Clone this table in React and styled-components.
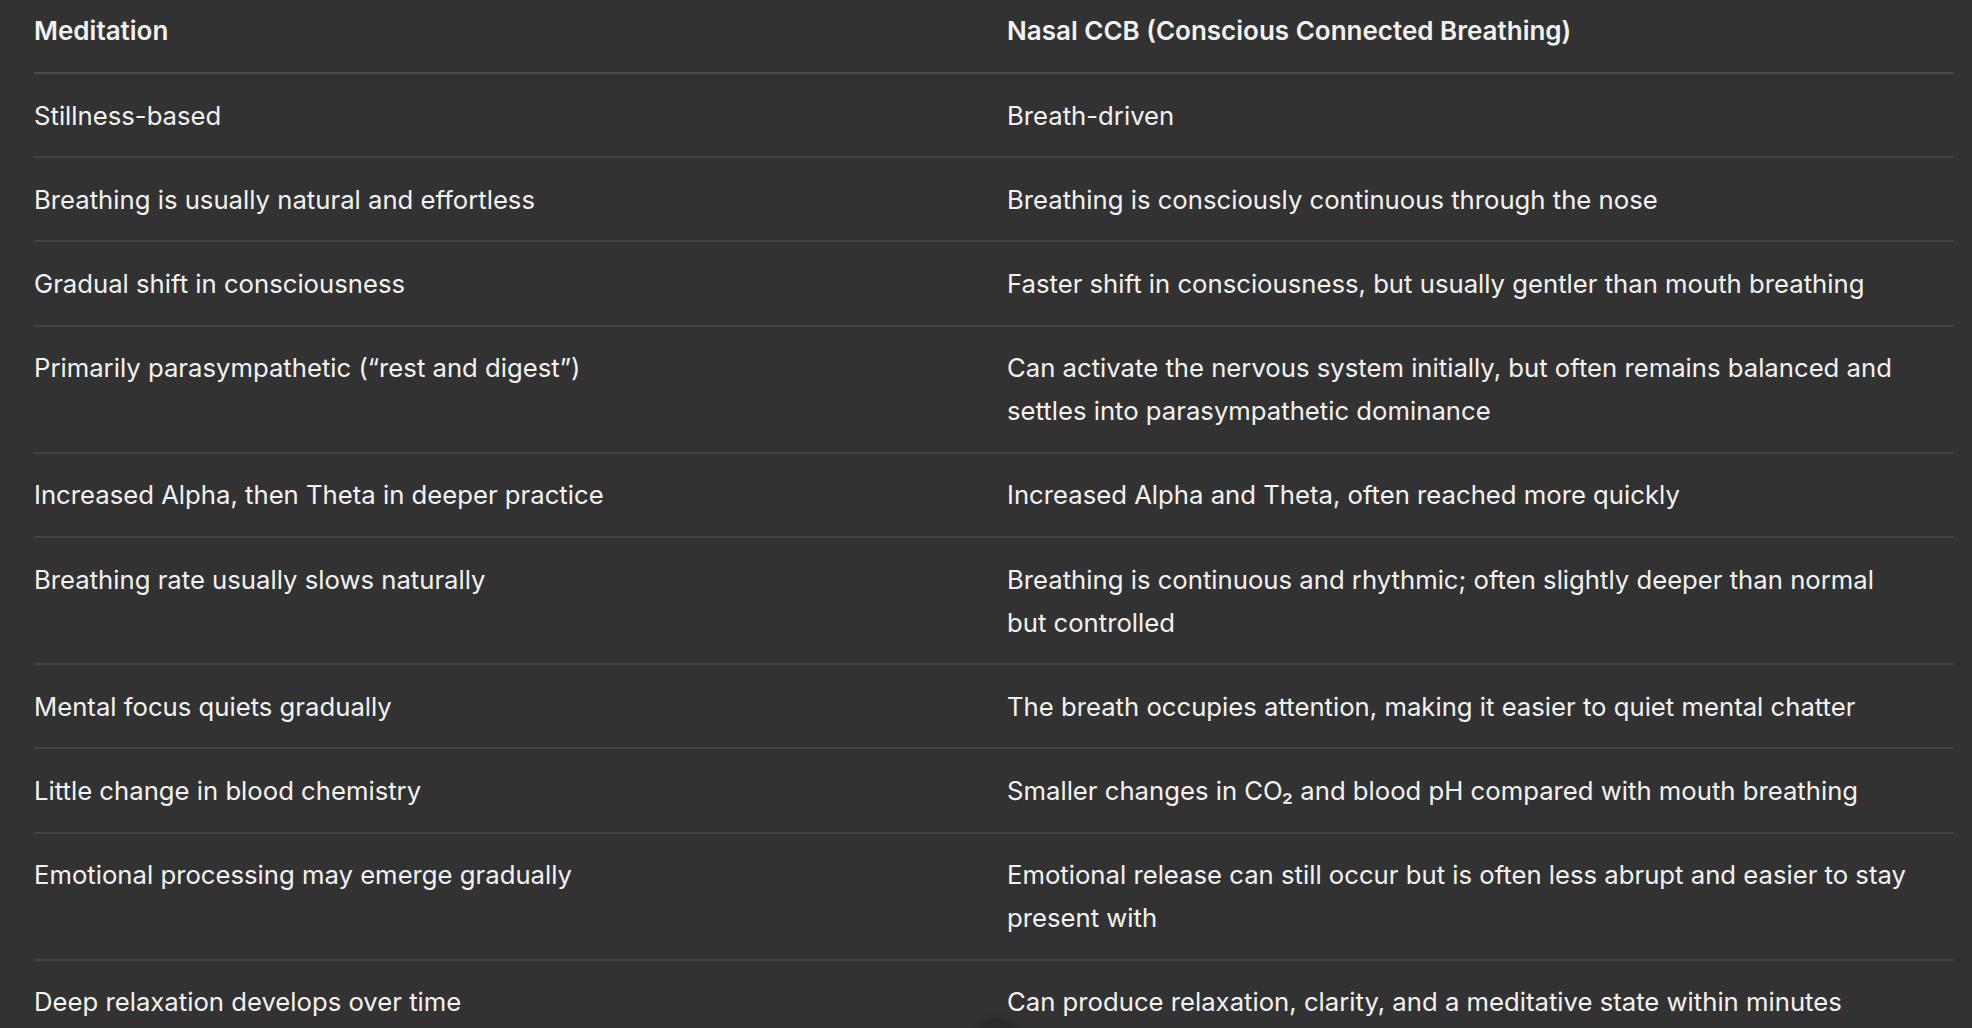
import React from "react";
import styled, { createGlobalStyle } from "styled-components";

const Global = createGlobalStyle`
  html, body {
    margin: 0;
    padding: 0;
    background: #323232;
  }
  body {
    font-family: Inter, "Noto Sans", "Liberation Sans", sans-serif;
    color: #f2f2f2;
    -webkit-font-smoothing: antialiased;
  }
`;

const Page = styled.div`
  position: relative;
  height: 1028px;
  overflow: hidden;
  padding: 0 19px 0 34px;
  box-sizing: border-box;
`;

const Table = styled.table`
  width: 1919px;
  border-collapse: collapse;
  table-layout: fixed;
  font-size: 25.7px;
  line-height: 43px;
`;

const Col = styled.col`
  width: ${(p) => p.$w}px;
`;

const HeadCell = styled.th`
  text-align: left;
  font-weight: 600;
  font-size: 26px;
  padding: 9px ${(p) => (p.$first ? 24 : 40)}px 20px ${(p) => (p.$first ? 0 : 24)}px;
  border-bottom: 2px solid #4b4b4b;
  vertical-align: top;
`;

const Cell = styled.td`
  font-weight: 400;
  padding: 19.6px ${(p) => (p.$first ? 24 : 40)}px 19.6px ${(p) => (p.$first ? 0 : 24)}px;
  border-bottom: 2px solid #434343;
  vertical-align: top;
`;

const ScrollButton = styled.div`
  position: absolute;
  left: 973px;
  top: 1022px;
  width: 48px;
  height: 48px;
  border-radius: 50%;
  background: #2b2b2b;
  box-shadow: 0 -2px 8px rgba(0, 0, 0, 0.25);
`;

const rows = [
  ["Stillness-based", "Breath-driven"],
  ["Breathing is usually natural and effortless", "Breathing is consciously continuous through the nose"],
  ["Gradual shift in consciousness", "Faster shift in consciousness, but usually gentler than mouth breathing"],
  [
    "Primarily parasympathetic (\u201Crest and digest\u201D)",
    "Can activate the nervous system initially, but often remains balanced and settles into parasympathetic dominance",
  ],
  ["Increased Alpha, then Theta in deeper practice", "Increased Alpha and Theta, often reached more quickly"],
  [
    "Breathing rate usually slows naturally",
    "Breathing is continuous and rhythmic; often slightly deeper than normal but controlled",
  ],
  ["Mental focus quiets gradually", "The breath occupies attention, making it easier to quiet mental chatter"],
  ["Little change in blood chemistry", "Smaller changes in CO\u2082 and blood pH compared with mouth breathing"],
  [
    "Emotional processing may emerge gradually",
    "Emotional release can still occur but is often less abrupt and easier to stay present with",
  ],
  ["Deep relaxation develops over time", "Can produce relaxation, clarity, and a meditative state within minutes"],
];

export default function App() {
  return (
    <>
      <Global />
      <Page>
        <Table>
          <colgroup>
            <Col $w={949} />
            <Col $w={970} />
          </colgroup>
          <thead>
            <tr>
              <HeadCell $first>Meditation</HeadCell>
              <HeadCell>Nasal CCB (Conscious Connected Breathing)</HeadCell>
            </tr>
          </thead>
          <tbody>
            {rows.map(([a, b], i) => (
              <tr key={i}>
                <Cell $first>{a}</Cell>
                <Cell>{b}</Cell>
              </tr>
            ))}
          </tbody>
        </Table>
        <ScrollButton />
      </Page>
    </>
  );
}
